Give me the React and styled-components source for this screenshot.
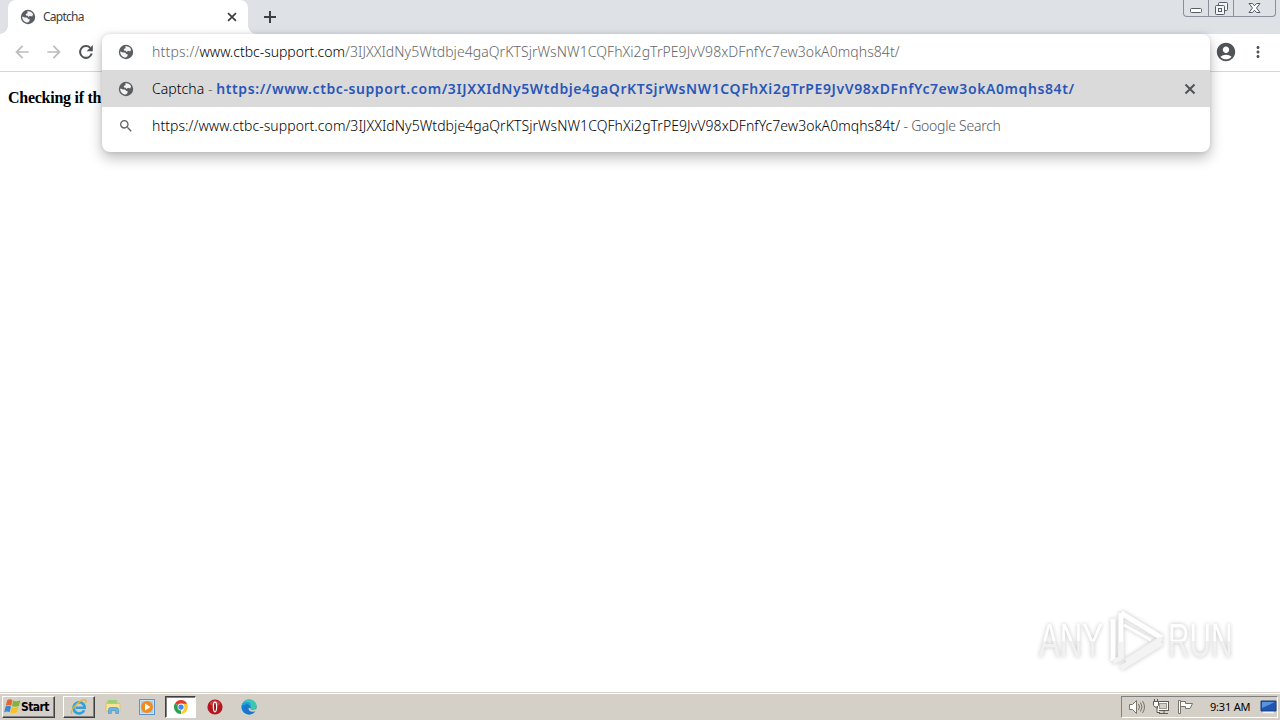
import React from 'react';
import styled, { createGlobalStyle } from 'styled-components';
import {
    MdArrowBack,
    MdArrowForward,
    MdSearch,
    MdAccountCircle,
    MdMoreVert,
} from 'react-icons/md';

const PATH = '/3IJXXIdNy5Wtdbje4gaQrKTSjrWsNW1CQFhXi2gTrPE9JvV98xDFnfYc7ew3okA0mqhs84t/';
const HOST = 'www.ctbc-support.com';
const URL_TEXT = `https://${HOST}${PATH}`;

const GlobalStyle = createGlobalStyle`
  * {
    box-sizing: border-box;
  }
  body {
    margin: 0;
    overflow: hidden;
    background: #fff;
    font-family: "Noto Sans", sans-serif;
  }
  svg {
    display: block;
    flex: none;
  }
`;

const Screen = styled.div`
  position: relative;
  display: flex;
  flex-direction: column;
  width: 1280px;
  height: 720px;
`;

const TabStrip = styled.div`
  display: flex;
  flex: none;
  height: 34px;
  background: #dee1e6;
`;

// Rounded foot on each side of the active tab
const TabFoot = styled.div`
  align-self: flex-end;
  width: 8px;
  height: 8px;
  background: radial-gradient(circle at ${(props) => props.$side} top, #dee1e6 7.5px, #fff 8px);
`;

const Tab = styled.div`
  display: flex;
  align-items: center;
  width: 240px;
  height: 34px;
  padding: 0 9px 0 12px;
  border-radius: 8px 8px 0 0;
  background: #fff;
  color: #5f6368;
`;

const TabTitle = styled.span`
  flex: 1;
  margin-left: 7px;
  font-size: 12px;
  letter-spacing: -0.75px;
  line-height: 16px;
  color: #3c4043;
`;

const NewTab = styled.div`
  display: flex;
  align-items: center;
  margin-left: 5px;
  color: #3c4043;
`;

const WindowButtons = styled.div`
  display: flex;
  height: 17px;
  margin-left: auto;
  margin-right: 4px;
  border: 1px solid #8b8f99;
  border-top: none;
  border-radius: 0 0 4px 4px;
`;

const WindowButton = styled.div`
  display: flex;
  justify-content: center;
  width: ${(props) => props.$width}px;
  border-left: ${(props) => (props.$first ? 'none' : '1px solid #8b8f99')};
`;

const Toolbar = styled.div`
  display: flex;
  flex: none;
  align-items: center;
  height: 38px;
  padding: 0 13px 2px;
  border-bottom: 1px solid #d6d7d9;
`;

const ToolIcon = styled.div`
  display: flex;
  justify-content: center;
  width: ${(props) => props.$width || 32}px;
  margin-left: ${(props) => props.$gap || 0};
  color: ${(props) => (props.$disabled ? '#babcbe' : '#505357')};
`;

const Page = styled.div`
  flex: 1;
  padding: 17px 8px;
  font-family: "Liberation Serif", serif;
  font-size: 16px;
  font-weight: bold;
  letter-spacing: -0.27px;
  line-height: 18px;
  color: #000;
`;

const Dropdown = styled.div`
  position: absolute;
  left: 102px;
  top: 34px;
  width: 1108px;
  height: 118px;
  border-radius: 8px;
  background: #fff;
  box-shadow: 0 6px 14px rgba(0, 0, 0, 0.26), 0 0 4px rgba(0, 0, 0, 0.12);
`;

const Row = styled.div`
  display: flex;
  align-items: center;
  height: ${(props) => (props.$input ? 36 : 37)}px;
  padding: 0 12px 0 16px;
  background: ${(props) => (props.$selected ? '#dadada' : 'transparent')};
  color: #5f6368;
`;

const RowText = styled.div`
  flex: 1;
  margin-left: 18px;
  font-size: 14px;
  font-weight: 300;
  letter-spacing: 0.06px;
  line-height: 20px;
  white-space: pre;
  color: #000;
`;

const Part = styled.span`
  letter-spacing: ${(props) => (props.$spacing === undefined ? 'inherit' : `${props.$spacing}px`)};
  color: ${(props) => props.$color || 'inherit'};
  font-weight: ${(props) => (props.$bold ? 600 : 'inherit')};
`;

const Watermark = styled.div`
  position: absolute;
  left: 1039px;
  top: 608px;
  display: flex;
  align-items: center;
  width: 198px;
  height: 66px;
  filter: drop-shadow(0 0 2px rgba(0, 0, 0, 0.24));
`;

const WatermarkWord = styled.div`
  width: ${(props) => props.$width}px;

  span {
    display: inline-block;
    font-family: "Liberation Sans Narrow", "Liberation Sans", sans-serif;
    font-size: 48px;
    line-height: 66px;
    transform: scaleX(${(props) => props.$scale});
    transform-origin: left center;
    background: linear-gradient(#fff 50%, #f1f1f1 50%);
    background-clip: text;
    color: transparent;
    white-space: nowrap;
  }
`;

const Taskbar = styled.div`
  display: flex;
  flex: none;
  align-items: center;
  height: 28px;
  padding: 0 2px 0 1px;
  border-top: 1px solid #d4d0c8;
  background: #d4d0c8;
  box-shadow: inset 0 1px 0 #fff;
  font-family: "DejaVu Sans Condensed", "DejaVu Sans", sans-serif;
`;

const StartButton = styled.div`
  display: flex;
  align-items: center;
  width: 53px;
  height: 22px;
  margin-left: 1px;
  padding-left: 1px;
  border: 1px solid;
  border-color: #fff #404040 #404040 #fff;
  box-shadow: inset -1px -1px 0 #808080;
  font-size: 12px;
  font-weight: bold;
  letter-spacing: -0.55px;
  color: #000;
`;

const TaskButton = styled.div`
  display: flex;
  align-items: center;
  justify-content: center;
  width: ${(props) => props.$width || 34}px;
  height: 22px;
  margin-left: ${(props) => props.$gap || 0}px;
  border: 1px solid transparent;
  ${(props) => props.$raised && `
    border-color: #fff #404040 #404040 #fff;
    box-shadow: inset -1px -1px 0 #808080;
  `}
  ${(props) => props.$pressed && `
    border-color: #404040 #fff #fff #404040;
    box-shadow: inset 1px 1px 0 #808080;
    background: #fff;
  `}
`;

const Tray = styled.div`
  display: flex;
  align-items: center;
  gap: 7px;
  width: 157px;
  height: 22px;
  margin-left: auto;
  padding-left: 6px;
  border: 1px solid;
  border-color: #808080 #fff #fff #808080;
`;

const Clock = styled.span`
  width: 42px;
  margin: 0 1px 0 9px;
  font-family: "Noto Sans", sans-serif;
  font-size: 11px;
  letter-spacing: -0.2px;
  white-space: nowrap;
  color: #000;
`;

const CloseIcon = ({ size, color }) => (
    <svg width={size} height={size} viewBox="0 0 16 16" fill="none" stroke={color} strokeWidth="2">
        <path d="M3.500 3.500l9 9M12.500 3.500l-9 9" />
    </svg>
);

const PlusIcon = () => (
    <svg width="18" height="18" viewBox="0 0 18 18" fill="none" stroke="currentColor" strokeWidth="2">
        <path d="M9 3v12M3 9h12" />
    </svg>
);

const ReloadIcon = () => (
    <svg width="20" height="20" viewBox="0 0 20 20" fill="none">
        <path d="M14.200 5.800A5.900 5.900 0 1 0 15.700 11.500" stroke="currentColor" strokeWidth="2" />
        <path d="M16.800 3v6.200h-6.200z" fill="currentColor" />
    </svg>
);

const GlobeIcon = () => (
    <svg width="16" height="16" viewBox="0 0 16 16">
        <circle cx="8" cy="8" r="7.200" fill="#5a5d61" />
        <path d="M7.200 2.500C9.500 1.900 12 3.300 13.100 5.200L12.200 7.400 10 6.700 8.600 8 7.700 6.700 6 6.400 5.700 4.900 7.600 4.200z" fill="#f4f4f4" />
        <path d="M2.200 7.600 5 8.400 7 8.500 8.300 10 9.900 10.600 9.300 12.200 7.900 13.600C4.500 13.700 2 11 2.200 7.600z" fill="#f4f4f4" />
    </svg>
);

const MinimizeIcon = () => (
    <svg width="12" height="16" viewBox="0 0 12 16">
        <rect x="0.5" y="8.5" width="11" height="4" rx="1" fill="#fff" stroke="#565b66" />
    </svg>
);

const RestoreIcon = () => (
    <svg width="13" height="16" viewBox="0 0 13 16" fill="#f4f5f7" stroke="#565b66">
        <rect x="3.5" y="2.5" width="9" height="8" rx="1" />
        <rect x="0.5" y="5.5" width="9" height="9" rx="1" />
        <rect x="3.5" y="8.5" width="3" height="3" />
    </svg>
);

const CrossIcon = () => (
    <svg width="13" height="16" viewBox="0 0 13 16">
        <path
            d="M1 3.500h3.500l2 2.300 2-2.300H12L8.500 8l3.500 4.500H8.500l-2-2.300-2 2.300H1L4.500 8z"
            fill="#fff"
            stroke="#565b66"
        />
    </svg>
);

const WindowsFlag = () => (
    <svg width="17" height="17" viewBox="0 0 16 16">
        <path d="M3 2Q5.500.5 8 2L6.800 7.200Q4.300 6 1.700 7.200z" fill="#e8662c" />
        <path d="M8.700 2.400Q11.500 4 15.500 2.200L14 7.500Q10.500 9 7.500 7.600z" fill="#7db63b" />
        <path d="M1.500 8Q4 6.800 6.600 8L5.300 13.200Q2.700 12 .2 13.300z" fill="#3d86d0" />
        <path d="M7.300 8.400Q10.500 9.800 13.800 8.300L12.300 13.500Q9 15.200 6 13.700z" fill="#f5c125" />
    </svg>
);

const ExplorerE = () => (
    <svg width="18" height="18" viewBox="0 0 18 18" fill="none">
        <path d="M14.200 12.200A5.600 5.600 0 1 1 14.700 9.800H5.500" stroke="#32a0dc" strokeWidth="2.600" />
        <path d="M2.300 15.700C-.8 15.200 4.500 6 11 2.800c4-2 6-1.200 4.600 2.200" stroke="#e8b42c" strokeWidth="1.300" />
    </svg>
);

const FolderIcon = () => (
    <svg width="17" height="17" viewBox="0 0 17 17">
        <path d="M1.500 3h5l1 1.500h6V13h-12z" fill="#e6bf58" />
        <path d="M3 2h9v4H3z" fill="#9bcf72" />
        <path d="M1 5.500h14V13H1z" fill="#f7e39b" stroke="#d6b45a" strokeWidth=".6" />
        <path d="M3.500 15.500v-4q0-2 2-2h6q2 0 2 2v4h-2.800v-3H6.300v3z" fill="#69b5e5" stroke="#3c8ec4" strokeWidth=".6" />
    </svg>
);

const PlayerIcon = () => (
    <svg width="16" height="16" viewBox="0 0 16 16">
        <rect x=".5" y=".5" width="15" height="15" fill="#c9e2f5" stroke="#5b94c9" />
        <rect x="2" y="2" width="12" height="12" fill="#a9cfec" />
        <circle cx="8" cy="8" r="6" fill="#f48a1c" />
        <path d="M6 4.500 11.500 8 6 11.500z" fill="#fff" />
    </svg>
);

const ChromeIcon = () => (
    <svg width="14" height="14" viewBox="0 0 16 16">
        <path d="M8 8 1.070 4A8 8 0 0 1 14.930 4z" fill="#e33b2e" />
        <path d="M8 8v8A8 8 0 0 1 1.070 4z" fill="#2da04b" />
        <path d="M8 4.300h6.900A8 8 0 0 1 8 16l3.300-6z" fill="#fcc934" />
        <circle cx="8" cy="8" r="3.900" fill="#fff" />
        <circle cx="8" cy="8" r="3" fill="#4285f4" />
    </svg>
);

const OperaIcon = () => (
    <svg width="16" height="16" viewBox="0 0 16 16">
        <circle cx="8" cy="8" r="7.600" fill="#b5161d" />
        <ellipse cx="8" cy="4.500" rx="5" ry="3" fill="#dc5a55" opacity=".6" />
        <ellipse cx="8" cy="8" rx="1.600" ry="4.800" fill="#8c0b10" stroke="#fff" strokeWidth="1.300" />
    </svg>
);

const EdgeIcon = () => (
    <svg width="16" height="16" viewBox="0 0 16 16">
        <circle cx="8" cy="8" r="7.600" fill="#167cd2" />
        <path d="M.6 7C1.500 2.500 5 .4 8.300.4c4.500 0 7.300 3.400 7.300 6.600 0 2.500-2 3.700-4 3.700-1.700 0-2.400-.7-2-1.400C10.500 7 8.500 5 6 5 3.500 5 1.500 6 .6 7z" fill="#3ac8b0" />
        <path d="M.6 7C1.500 3.500 4.500 3 6 3c3 0 4 2 4 3.500C9 5.300 7.500 5 6 5 3.500 5 1.500 6 .6 7z" fill="#249ed8" />
        <path d="M6 7.500c-1 4 2 6.500 7.800 5.200C11.500 15.500 8 16 5.500 14.700 2 12.500 3 8.500 6 7.500z" fill="#1976c9" />
        <path d="M9.700 9.200C9 11 12 11.600 15.700 9.800l-1 2.400C11 13.500 7.200 12.200 7.600 9z" fill="#d4d0c8" />
    </svg>
);

const SpeakerIcon = () => (
    <svg width="18" height="16" viewBox="0 0 18 16" fill="none" stroke="#77746d">
        <path d="M1.500 5.500h3l4-4v13l-4-4h-3z" fill="#fff" />
        <path d="M10.500 5q2 3 0 6M12.500 3.500q3 4.500 0 9M14.500 2q4 6 0 12" />
    </svg>
);

const NetworkIcon = () => (
    <svg width="17" height="16" viewBox="0 0 17 16" fill="#fff" stroke="#5c5a55">
        <rect x="4.500" y="2.500" width="11" height="9" />
        <rect x="6.500" y="4.500" width="7" height="5" fill="#d4d0c8" stroke="#9b988f" />
        <path d="M6 14.500h9M11 12v2" />
        <path d="M.5 2.500h5v4L4 8v5.500h3M.5 2.500v4L2 8h2M1.500 0v2M4.500 0v2" />
    </svg>
);

const FlagIcon = () => (
    <svg width="17" height="16" viewBox="0 0 17 16" fill="#fff" stroke="#77746d">
        <path d="M3.500 2.500h5v2h7l-2.500 5H8.500v-2h-5" />
        <path d="M1.500 1.500h2v13h-2z" />
    </svg>
);

const DesktopIcon = () => (
    <svg width="17" height="14" viewBox="0 0 17 14">
        <path d="M1 1h15v10H1z" fill="#1f56b0" stroke="#173f80" />
        <path d="M2 2h13L2 8z" fill="#5a94df" />
        <path d="M3 12.500h11" stroke="#f3f3f3" strokeWidth="1.500" />
    </svg>
);

const PlayMark = () => (
    <svg width="62" height="66" viewBox="0 0 62 66" fill="none" strokeLinejoin="round">
        <path d="M15 5v46M15 5l41 25" stroke="#fff" strokeWidth="5" />
        <path d="M7 11v42" stroke="#fff" strokeWidth="5" />
        <path d="M18 17l27 15" stroke="#fff" strokeWidth="3" />
        <path d="M56 30 20 53M15 60l41-25M7 54l8-4M15 51V34" stroke="#f3f3f3" strokeWidth="5" />
    </svg>
);

const App = () => {
    return (
        <Screen>
            <GlobalStyle />
            <TabStrip>
                <TabFoot $side="left" />
                <Tab>
                    <GlobeIcon />
                    <TabTitle>Captcha</TabTitle>
                    <CloseIcon size={14} color="#3c4043" />
                </Tab>
                <TabFoot $side="right" />
                <NewTab>
                    <PlusIcon />
                </NewTab>
                <WindowButtons>
                    <WindowButton $width={24} $first><MinimizeIcon /></WindowButton>
                    <WindowButton $width={25}><RestoreIcon /></WindowButton>
                    <WindowButton $width={42}><CrossIcon /></WindowButton>
                </WindowButtons>
            </TabStrip>

            <Toolbar>
                <ToolIcon $width={18} $disabled><MdArrowBack size={20} /></ToolIcon>
                <ToolIcon $width={18} $gap="14px" $disabled><MdArrowForward size={20} /></ToolIcon>
                <ToolIcon $width={18} $gap="14px"><ReloadIcon /></ToolIcon>
                <ToolIcon $gap="auto"><MdAccountCircle size={22} /></ToolIcon>
                <ToolIcon $width={18} $gap="7px"><MdMoreVert size={18} /></ToolIcon>
            </Toolbar>

            <Page>Checking if th</Page>

            <Dropdown>
                <Row $input>
                    <GlobeIcon />
                    <RowText>
                        <Part $color="#666" $spacing={0.2}>https://</Part>
                        <Part $spacing={-0.02}>{HOST}</Part>
                        <Part $color="#666">{PATH}</Part>
                    </RowText>
                </Row>
                <Row $selected>
                    <GlobeIcon />
                    <RowText>
                        <Part>Captcha</Part>
                        <Part $color="#5f6368"> - </Part>
                        <Part $bold $color="#2a56b8" $spacing={0.59}>{URL_TEXT}</Part>
                    </RowText>
                    <CloseIcon size={16} color="#505357" />
                </Row>
                <Row>
                    <MdSearch size={16} />
                    <RowText>
                        <Part>{URL_TEXT}</Part>
                        <Part $color="#55585c" $spacing={-0.25}> - Google Search</Part>
                    </RowText>
                </Row>
            </Dropdown>

            <Watermark>
                <WatermarkWord $width={67} $scale={0.65}><span>ANY</span></WatermarkWord>
                <PlayMark />
                <WatermarkWord $width={68} $scale={0.62}><span>RUN</span></WatermarkWord>
            </Watermark>

            <Taskbar>
                <StartButton>
                    <WindowsFlag />
                    Start
                </StartButton>
                <TaskButton $gap={8} $width={32} $raised><ExplorerE /></TaskButton>
                <TaskButton $gap={1}><FolderIcon /></TaskButton>
                <TaskButton><PlayerIcon /></TaskButton>
                <TaskButton $gap={1} $width={31} $pressed><ChromeIcon /></TaskButton>
                <TaskButton $gap={2}><OperaIcon /></TaskButton>
                <TaskButton><EdgeIcon /></TaskButton>
                <Tray>
                    <SpeakerIcon />
                    <NetworkIcon />
                    <FlagIcon />
                    <Clock>9:31 AM</Clock>
                    <DesktopIcon />
                </Tray>
            </Taskbar>
        </Screen>
    );
};

export default App;
